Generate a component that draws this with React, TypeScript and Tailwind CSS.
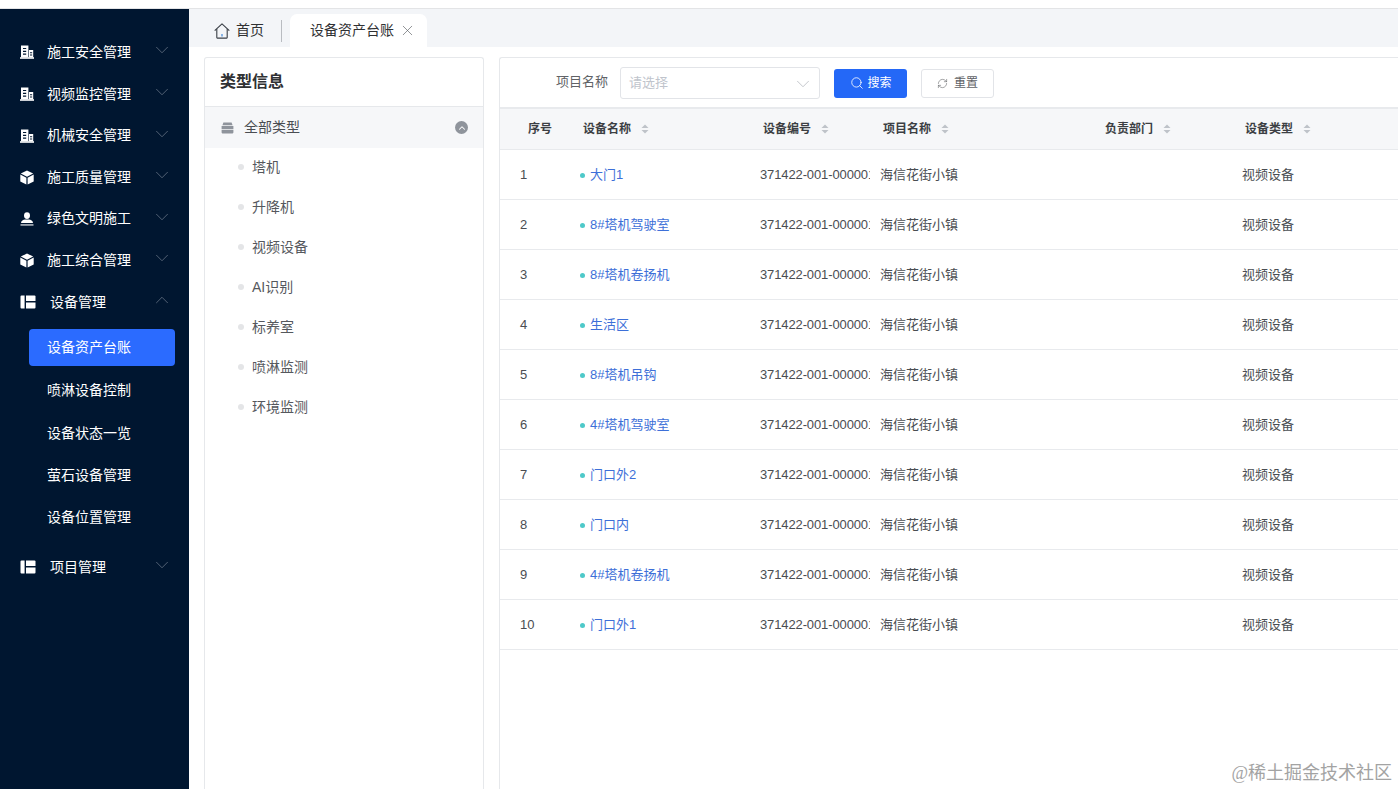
import { ChevronDown, ChevronUp, RefreshCw, Search, X } from "lucide-react";

const FONT = "font-['Liberation_Sans','Noto_Sans_CJK_SC',sans-serif]";

function BuildingIcon() {
  return (
    <svg width="14" height="14" viewBox="0 0 14 14" fill="white">
      <path d="M1 .5h7.4V12.4H1z" />
      <path d="M9 5h4.2v7.4H9z" />
      <path d="M0 12.2h14V13.8H0z" />
      <path d="M3 3h3.2v1.1H3zM3 5.8h3.2v1.1H3zM3 8.6h3.2v1.1H3zM10 7.2h2.2v1H10zM10 9.6h2.2v1H10z" fill="#001630" />
    </svg>
  );
}

function CubeIcon() {
  return (
    <svg width="14" height="15" viewBox="0 0 14 15" fill="white">
      <path d="M7 .4 13.2 3.6 7 6.8.8 3.6z" />
      <path d="M.3 4.6 6.4 7.8V14.6L.3 11.4z" />
      <path d="M13.7 4.6 7.6 7.8V14.6L13.7 11.4z" />
    </svg>
  );
}

function UserIcon() {
  return (
    <svg width="14" height="14" viewBox="0 0 14 14" fill="white">
      <ellipse cx="7" cy="3.6" rx="3" ry="3.4" />
      <path d="M1 11c0-2.4 2.4-3.4 4-3.6h4c1.6.2 4 1.2 4 3.6z" />
      <path d="M.5 12.4h13v1.1H.5z" />
    </svg>
  );
}

function LayoutIcon() {
  return (
    <svg width="16" height="14" viewBox="0 0 16 14" fill="white">
      <path d="M.5 1.5A1 1 0 0 1 1.5.5H4.6V13.5H1.5a1 1 0 0 1-1-1z" />
      <path d="M6 .5h8.5a1 1 0 0 1 1 1V6H6z" />
      <path d="M6 7.6h9.5v4.9a1 1 0 0 1-1 1H6z" />
    </svg>
  );
}

function HomeIcon() {
  return (
    <svg width="16" height="16" viewBox="0 0 16 16" fill="none" stroke="#3a3f46" strokeWidth="1.1" strokeLinejoin="round">
      <path d="M.7 7.6 8 .9l7.3 6.7" />
      <path d="M2.8 6v8.6a.5.5 0 0 0 .5.5h9.4a.5.5 0 0 0 .5-.5V6" />
      <path d="M8 11v2.6" stroke="#2f7fd6" />
    </svg>
  );
}

function BoxIcon() {
  return (
    <svg width="13" height="12" viewBox="0 0 13 12" fill="#8f949c">
      <path d="M2.4.6h8.2l1 2.6H1.4z" />
      <path d="M.6 4h11.8v3H.6z" />
      <path d="M.6 7.8h11.8v2.8a.8.8 0 0 1-.8.8H1.4a.8.8 0 0 1-.8-.8z" />
    </svg>
  );
}

function SortIcon() {
  return (
    <svg width="8" height="10" viewBox="0 0 8 10" fill="#bfc3c9" className="ml-[10px]">
      <path d="M4 .5 7.5 4H.5z" />
      <path d="M4 9.5.5 6h7z" />
    </svg>
  );
}

const menus = [
  { label: "施工安全管理", icon: <BuildingIcon />, h: "h-[42px]" },
  { label: "视频监控管理", icon: <BuildingIcon />, h: "h-[42px]" },
  { label: "机械安全管理", icon: <BuildingIcon />, h: "h-[41px]" },
  { label: "施工质量管理", icon: <CubeIcon />, h: "h-[42px]" },
  { label: "绿色文明施工", icon: <UserIcon />, h: "h-[41px]" },
  { label: "施工综合管理", icon: <CubeIcon />, h: "h-[42px]" },
];

const subMenus = [
  { label: "喷淋设备控制", h: "h-[42px]" },
  { label: "设备状态一览", h: "h-[43px]" },
  { label: "萤石设备管理", h: "h-[42px]" },
  { label: "设备位置管理", h: "h-[42px]" },
];

const types = ["塔机", "升降机", "视频设备", "AI识别", "标养室", "喷淋监测", "环境监测"];

const rows = ["大门1", "8#塔机驾驶室", "8#塔机卷扬机", "生活区", "8#塔机吊钩", "4#塔机驾驶室", "门口外2", "门口内", "4#塔机卷扬机", "门口外1"];

function Sidebar() {
  return (
    <aside className="w-[189px] shrink-0 bg-[#001630] text-white text-[14px] pt-[22px]">
      {menus.map((m) => (
        <div key={m.label} className={`${m.h} flex items-center pl-[20px] pr-[20px]`}>
          <span className="w-[27px] shrink-0 flex">{m.icon}</span>
          <span className="flex-1">{m.label}</span>
          <ChevronDown size={22} strokeWidth={0.7} className="text-[#7e8a99] -mt-[4px] -mr-[4px]" />
        </div>
      ))}
      <div className="h-[42px] flex items-center pl-[20px] pr-[20px]">
        <span className="w-[30px] shrink-0 flex"><LayoutIcon /></span>
        <span className="flex-1">设备管理</span>
        <ChevronUp size={22} strokeWidth={0.7} className="text-[#7e8a99] -mt-[4px] -mr-[4px]" />
      </div>
      <div className="pt-[6px] pl-[29px] pr-[14px]">
        <div className="h-[37px] rounded-[4px] bg-[#2b6bff] flex items-center pl-[18px]">设备资产台账</div>
      </div>
      <div className="pl-[47px]">
        {subMenus.map((s) => (
          <div key={s.label} className={`${s.h} flex items-center pt-[7px]`}>{s.label}</div>
        ))}
      </div>
      <div className="mt-[11px] h-[42px] flex items-center pl-[20px] pr-[20px]">
        <span className="w-[30px] shrink-0 flex"><LayoutIcon /></span>
        <span className="flex-1">项目管理</span>
        <ChevronDown size={22} strokeWidth={0.7} className="text-[#7e8a99] -mt-[4px] -mr-[4px]" />
      </div>
    </aside>
  );
}

function Tabs() {
  return (
    <div className="h-[38px] shrink-0 bg-[#f3f5f8] flex items-end pl-[25px] text-[14px] text-[#303133]">
      <div className="h-[38px] flex items-center gap-[6px] pt-[5px]">
        <HomeIcon />
        <span>首页</span>
        <span className="ml-[11px] h-[22px] w-px bg-[#b9bcc1]" />
      </div>
      <div className="ml-[8px] h-[33px] w-[137px] rounded-t-[7px] bg-white flex items-center pl-[20px]">
        <span>设备资产台账</span>
        <X size={17} strokeWidth={0.9} className="ml-[5px] text-[#55595f]" />
      </div>
    </div>
  );
}

function TypePanel() {
  return (
    <section className="w-[280px] shrink-0 border border-[#e6e8eb] rounded-t-[3px] border-b-0">
      <div className="h-[49px] border-b border-[#e6e8eb] flex items-center pl-[15px] text-[16px] font-semibold text-[#303133]">类型信息</div>
      <div className="h-[41px] bg-[#f6f7f9] flex items-center pl-[16px] pr-[15px] text-[14px] text-[#4a4d52]">
        <BoxIcon />
        <span className="ml-[10px] flex-1">全部类型</span>
        <span className="w-[13px] h-[13px] rounded-full bg-[#8f949c] flex items-center justify-center">
          <ChevronUp size={10} strokeWidth={2.5} className="text-white" />
        </span>
      </div>
      <ul className="pl-[33px] text-[14px] text-[#55585d]">
        {types.map((t) => (
          <li key={t} className="h-[40px] flex items-center gap-[8px] first:mt-[-1px]">
            <span className="w-[6px] h-[6px] rounded-full bg-[#e4e5e7]" />
            <span className="ml-[-1px] pl-[1px]">{t}</span>
          </li>
        ))}
      </ul>
    </section>
  );
}

function Filter() {
  return (
    <div className="h-[49px] flex items-center pl-[56px] text-[13px]">
      <span className="text-[#606266] -mt-[2px]">项目名称</span>
      <div className="ml-[12px] w-[200px] h-[32px] border border-[#e2e4e8] rounded-[3px] flex items-center justify-between pl-[8px] pr-[5px] text-[#c0c4cc]">
        <span>请选择</span>
        <ChevronDown size={22} strokeWidth={0.8} className="text-[#b0b4ba] mt-[3px]" />
      </div>
      <button type="button" className="ml-[14px] mt-[1px] w-[73px] h-[29px] rounded-[3px] bg-[#2468f7] text-white text-[12px] flex items-center justify-center gap-[4px]">
        <Search size={14} strokeWidth={1.4} />
        <span>搜索</span>
      </button>
      <button type="button" className="ml-[14px] mt-[1px] w-[73px] h-[29px] rounded-[3px] border border-[#e2e4e8] text-[#606266] text-[12px] flex items-center justify-center gap-[6px]">
        <RefreshCw size={11} strokeWidth={1.25} />
        <span>重置</span>
      </button>
    </div>
  );
}

function HeadCell({ width, label, sort = true }: { width: string; label: string; sort?: boolean }) {
  return (
    <div className={`${width} shrink-0 flex items-center pl-[3px]`}>
      <span>{label}</span>
      {sort ? <SortIcon /> : null}
    </div>
  );
}

function DeviceTable() {
  return (
    <div className="text-[13px]">
      <div className="h-[43px] border-t-2 border-b border-[#e8eaed] bg-[#f6f7f9] flex text-[12px] font-semibold text-[#3c3f44]">
        <div className="w-[80px] shrink-0 flex items-center pl-[28px]">序号</div>
        <HeadCell width="w-[180px]" label="设备名称" />
        <HeadCell width="w-[120px]" label="设备编号" />
        <HeadCell width="w-[222px]" label="项目名称" />
        <HeadCell width="w-[140px]" label="负责部门" />
        <HeadCell width="w-[150px]" label="设备类型" />
      </div>
      {rows.map((name, i) => (
        <div key={name} className="h-[50px] border-b border-[#e8eaed] flex items-center text-[#4a4d52]">
          <div className="w-[80px] shrink-0 pl-[20px]">{i + 1}</div>
          <div className="w-[180px] shrink-0 flex items-center">
            <span className="w-[5px] h-[5px] rounded-full bg-[#4ec9c9] mt-[2px]" />
            <span className="ml-[5px] text-[#3d6fd8]">{name}</span>
          </div>
          <div className="w-[110px] mr-[10px] shrink-0 overflow-hidden whitespace-nowrap tracking-[-0.12px]">371422-001-000001</div>
          <div className="w-[222px] shrink-0">海信花街小镇</div>
          <div className="w-[140px] shrink-0" />
          <div className="w-[150px] shrink-0">视频设备</div>
        </div>
      ))}
    </div>
  );
}

export default function App() {
  return (
    <div className={`${FONT} relative w-[1398px] h-[789px] overflow-hidden bg-white flex flex-col`}>
      <div className="h-[9px] shrink-0 bg-white border-b border-[#e3e4e6]" />
      <div className="flex-1 flex min-h-0">
        <Sidebar />
        <main className="flex-1 min-w-0 flex flex-col">
          <Tabs />
          <div className="flex-1 flex pt-[10px] pl-[15px] gap-[15px] min-h-0">
            <TypePanel />
            <section className="flex-1 min-w-0 border-l border-t border-[#e6e8eb] rounded-tl-[3px]">
              <Filter />
              <DeviceTable />
            </section>
          </div>
        </main>
      </div>
      <span className="absolute right-[6px] bottom-[3px] text-[18px] leading-[26px] text-[#a3a3a3] font-['Liberation_Serif','Noto_Sans_CJK_SC',serif]">@稀土掘金技术社区</span>
    </div>
  );
}
